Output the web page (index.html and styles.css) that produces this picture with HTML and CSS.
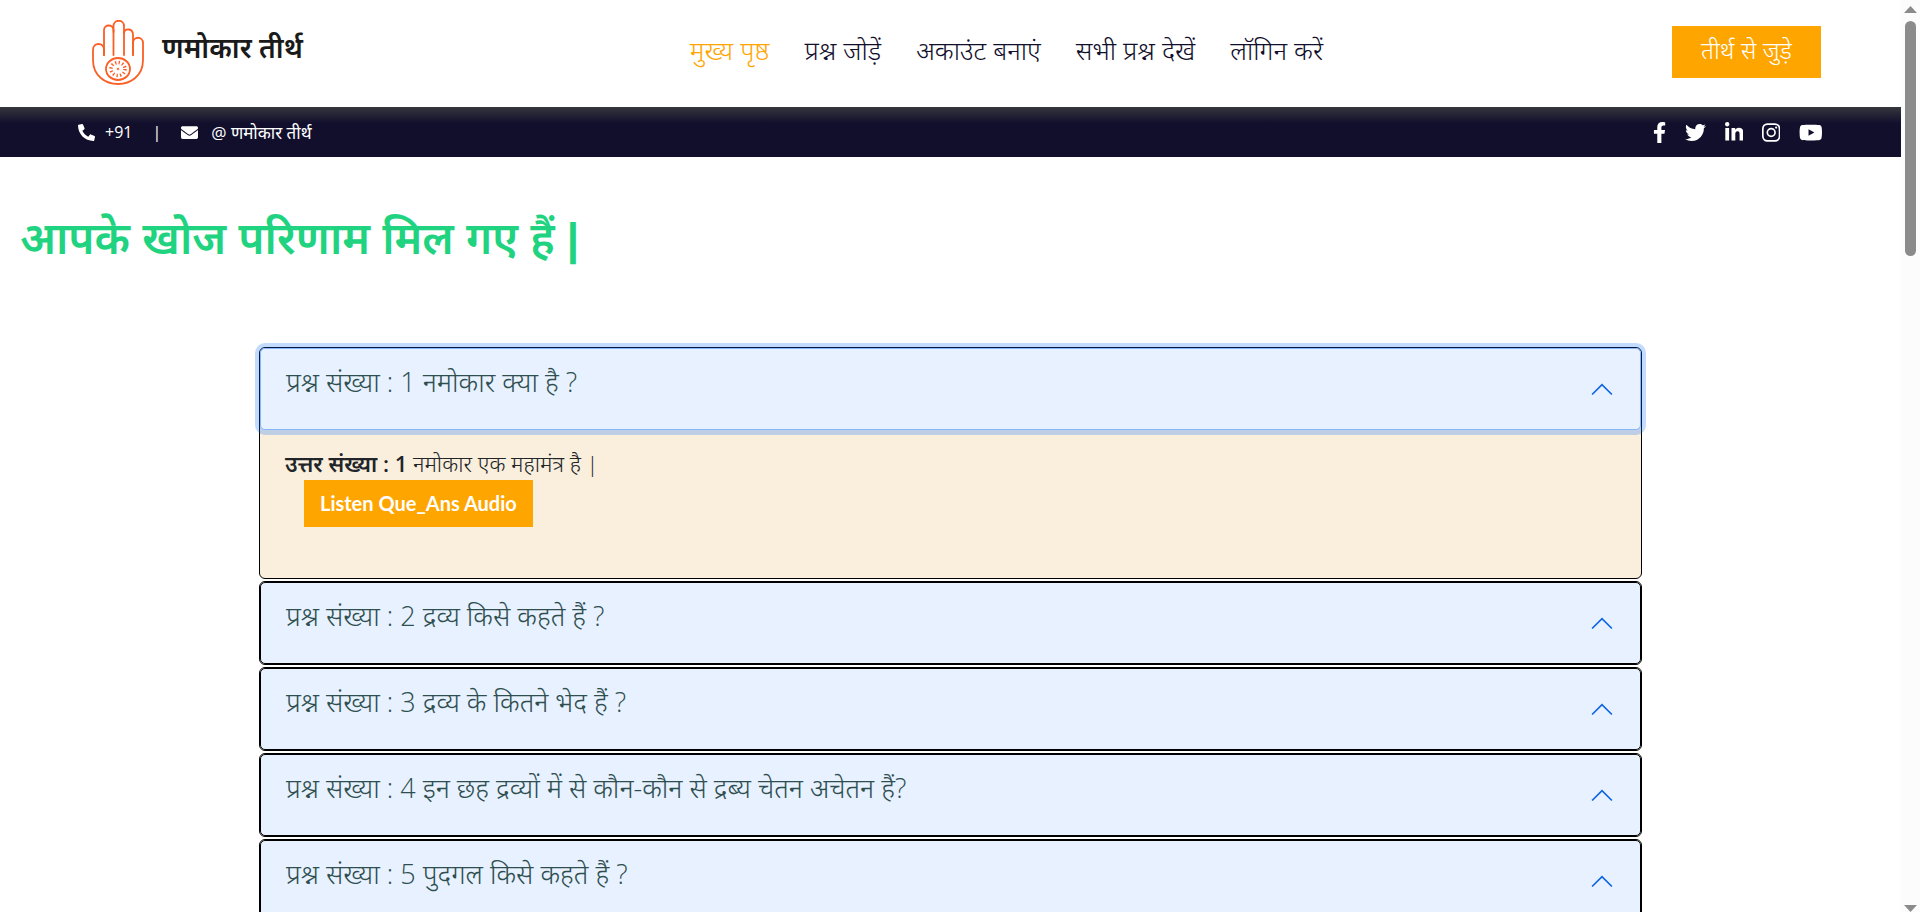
FILE: index.html
```
<!DOCTYPE html>
<html lang="hi">

<head>
  <meta charset="UTF-8">
  <meta name="viewport" content="width=device-width, initial-scale=1">
  <title>णमोकार तीर्थ</title>
  <link rel="stylesheet" href="styles.css">
</head>

<body>
  <div class="page">
    <header class="header">
      <a class="brand" href="#">
        <svg class="brand-logo" viewBox="0 0 54 68" fill="none" stroke="#fb5f26" stroke-width="1.8" stroke-linecap="round">
          <path d="M13 35V30C13 22 2 22 2 30V40C2 72 52 72 52 40V23C52 16 42 16 42 23V35" />
          <path d="M13 35V10C13 4 22.500 4 22.500 10V35" />
          <path d="M22.500 12V6C22.500 -1 33 -1 33 6V35" />
          <path d="M33 13C34 8 42 8 42 15V35" />
          <ellipse cx="27" cy="49" rx="12" ry="11" />
          <ellipse cx="27" cy="49" rx="7" ry="6.500" stroke-width="3.500" stroke-dasharray="1.300 2.250" stroke-linecap="butt" />
          <circle cx="27" cy="49" r=".4" />
        </svg>
        <span>णमोकार तीर्थ</span>
      </a>
      <nav class="nav">
        <a class="active" href="#">मुख्य पृष्ठ</a>
        <a href="#">प्रश्न जोड़ें</a>
        <a href="#">अकाउंट बनाएं</a>
        <a href="#">सभी प्रश्न देखें</a>
        <a href="#">लॉगिन करें</a>
      </nav>
      <a class="join" href="#">तीर्थ से जुड़े</a>
    </header>

    <div class="topbar">
      <div class="contact">
        <svg class="icon" viewBox="0 0 512 512"><path d="M493.400 24.600l-104-24c-11.300-2.600-22.900 3.300-27.500 13.900l-48 112c-4.200 9.800-1.400 21.300 6.900 28l60.600 49.600c-36 76.700-98.900 140.500-177.200 177.200l-49.600-60.600c-6.800-8.300-18.200-11.100-28-6.900l-112 48C3.900 366.500-2 378.100.6 389.400l24 104C27.100 504.200 36.700 512 48 512c256.100 0 464-207.500 464-464 0-11.200-7.700-20.900-18.600-23.400z" transform="matrix(-1 0 0 1 512 0)" /></svg>
        <span>+91</span>
        <span class="divider">|</span>
        <svg class="icon" viewBox="0 0 512 512"><path d="M502.300 190.800c3.900-3.100 9.700-.2 9.700 4.700V400c0 26.500-21.500 48-48 48H48c-26.500 0-48-21.500-48-48V195.600c0-5 5.700-7.800 9.700-4.700 22.400 17.400 52.100 39.500 154.100 113.600 21.100 15.400 56.700 47.800 92.200 47.600 35.700.3 72-32.800 92.300-47.600 102-74.100 131.600-96.300 154-113.700zM256 320c23.200.4 56.600-29.200 73.400-41.400 132.700-96.300 142.800-104.700 173.400-128.700 5.800-4.500 9.200-11.500 9.200-18.900v-19c0-26.500-21.500-48-48-48H48c-26.500 0-48 21.500-48 48v19c0 7.400 3.400 14.300 9.200 18.900 30.600 23.900 40.700 32.400 173.400 128.700 16.800 12.200 50.200 41.800 73.400 41.400z" /></svg>
        <a class="mail" href="#">@ णमोकार तीर्थ</a>
      </div>
      <div class="social">
        <a href="#" aria-label="Facebook"><svg viewBox="0 0 320 512"><path d="M279.140 288l14.220-92.660h-88.910v-60.130c0-25.350 12.420-50.060 52.240-50.060h40.420V6.260S260.430 0 225.360 0c-73.220 0-121.080 44.380-121.080 124.720v70.620H22.890V288h81.390v224h100.170V288z" /></svg></a>
        <a href="#" aria-label="Twitter"><svg viewBox="0 0 512 512"><path d="M459.370 151.716c.325 4.548.325 9.097.325 13.645 0 138.720-105.583 298.558-298.558 298.558-59.452 0-114.680-17.219-161.137-47.106 8.447.974 16.568 1.299 25.340 1.299 49.055 0 94.213-16.568 130.274-44.832-46.132-.975-84.792-31.188-98.112-72.772 6.498.974 12.995 1.624 19.818 1.624 9.421 0 18.843-1.300 27.614-3.573-48.081-9.747-84.143-51.980-84.143-102.985v-1.299c13.969 7.797 30.214 12.670 47.431 13.319-28.264-18.843-46.781-51.005-46.781-87.391 0-19.492 5.197-37.360 14.294-52.954 51.655 63.675 129.300 105.258 216.365 109.807-1.624-7.797-2.599-15.918-2.599-24.040 0-57.828 46.782-104.934 104.934-104.934 30.213 0 57.502 12.670 76.670 33.137 23.715-4.548 46.456-13.320 66.599-25.340-7.798 24.366-24.366 44.833-46.132 57.827 21.117-2.273 41.584-8.122 60.426-16.243-14.292 20.791-32.161 39.308-52.628 54.253z" /></svg></a>
        <a href="#" aria-label="LinkedIn"><svg viewBox="0 0 448 512"><path d="M100.280 448H7.400V148.900h92.880zM53.790 108.100C24.090 108.100 0 83.500 0 53.800a53.790 53.790 0 0 1 107.580 0c0 29.700-24.100 54.300-53.790 54.300zM447.900 448h-92.680V302.400c0-34.700-.7-79.200-48.290-79.200-48.290 0-55.690 37.700-55.690 76.700V448h-92.780V148.900h89.080v40.800h1.300c12.400-23.500 42.690-48.300 87.880-48.300 94 0 111.280 61.900 111.280 142.300V448z" /></svg></a>
        <a href="#" aria-label="Instagram"><svg viewBox="0 0 448 512"><path fill-rule="evenodd" d="M130 32H318A130 130 0 0 1 448 162V350A130 130 0 0 1 318 480H130A130 130 0 0 1 0 350V162A130 130 0 0 1 130 32zM136 73A95 95 0 0 0 41 168V344A95 95 0 0 0 136 439H312A95 95 0 0 0 407 344V168A95 95 0 0 0 312 73zM224 141a115 115 0 1 1 0 230 115 115 0 0 1 0-230zM224 182a74 74 0 1 0 0 148 74 74 0 0 0 0-148zM344 110a27 27 0 1 1 0 54 27 27 0 0 1 0-54z" /></svg></a>
        <a href="#" aria-label="YouTube"><svg viewBox="0 0 576 512"><path d="M549.655 124.083c-6.281-23.650-24.787-42.276-48.284-48.597C458.781 64 288 64 288 64S117.220 64 74.629 75.486c-23.497 6.322-42.003 24.947-48.284 48.597-11.412 42.867-11.412 132.305-11.412 132.305s0 89.438 11.412 132.305c6.281 23.650 24.787 41.500 48.284 47.821C117.220 448 288 448 288 448s170.780 0 213.371-11.486c23.497-6.321 42.003-24.171 48.284-47.821 11.412-42.867 11.412-132.305 11.412-132.305s0-89.438-11.412-132.305zm-317.510 213.508V175.185l142.739 81.205-142.739 81.201z" /></svg></a>
      </div>
    </div>

    <main>
      <h1>आपके खोज परिणाम मिल गए हैं |</h1>

      <div class="accordion">
        <div class="item">
          <button class="question focused" type="button" aria-expanded="true">
            <span>प्रश्न संख्या : 1 नमोकार क्या है ?</span>
            <svg class="chevron" viewBox="0 0 20 20"><path d="M1 15L10 6L19 15" /></svg>
          </button>
          <div class="answer">
            <p><strong>उत्तर संख्या : 1</strong> नमोकार एक महामंत्र है |</p>
            <button class="listen" type="button">Listen Que_Ans Audio</button>
          </div>
        </div>
        <div class="item">
          <button class="question" type="button">
            <span>प्रश्न संख्या : 2 द्रव्य किसे कहते हैं ?</span>
            <svg class="chevron" viewBox="0 0 20 20"><path d="M1 15L10 6L19 15" /></svg>
          </button>
        </div>
        <div class="item">
          <button class="question" type="button">
            <span>प्रश्न संख्या : 3 द्रव्य के कितने भेद हैं ?</span>
            <svg class="chevron" viewBox="0 0 20 20"><path d="M1 15L10 6L19 15" /></svg>
          </button>
        </div>
        <div class="item">
          <button class="question" type="button">
            <span>प्रश्न संख्या : 4 इन छह द्रव्यों में से कौन-कौन से द्रब्य चेतन अचेतन हैं?</span>
            <svg class="chevron" viewBox="0 0 20 20"><path d="M1 15L10 6L19 15" /></svg>
          </button>
        </div>
        <div class="item">
          <button class="question" type="button">
            <span>प्रश्न संख्या : 5 पुदगल किसे कहते हैं ?</span>
            <svg class="chevron" viewBox="0 0 20 20"><path d="M1 15L10 6L19 15" /></svg>
          </button>
        </div>
      </div>
    </main>
  </div>

  <div class="scrollbar" aria-hidden="true">
    <svg class="arrow" viewBox="0 0 13 7"><path d="M6.500 0L13 7H0z" /></svg>
    <div class="track">
      <div class="thumb"></div>
    </div>
    <svg class="arrow" viewBox="0 0 13 7"><path d="M0 0H13L6.500 7z" /></svg>
  </div>
</body>

</html>
```
FILE: styles.css
```
* {
  box-sizing: border-box;
}

body {
  display: flex;
  height: 100vh;
  margin: 0;
  overflow: hidden;
  font-family: "Open Sans", "Noto Sans", "Noto Sans Devanagari", sans-serif;
  font-size: 16px;
  color: #212529;
  background-color: #fff;
}

a {
  color: inherit;
  text-decoration: none;
}

button {
  border: none;
  font-family: inherit;
  cursor: pointer;
}

.page {
  flex: 1;
  min-width: 0;
  overflow: hidden;
}

/* header */
.header {
  display: flex;
  align-items: center;
  justify-content: space-between;
  height: 107px;
  padding: 0 80px;
}

.brand {
  display: flex;
  align-items: center;
  gap: 17px;
  padding: 0 38px 0 11px;
  font-size: 28px;
  font-weight: 600;
  line-height: 40px;
  color: #1a1a1a;
}

.brand-logo {
  width: 54px;
  height: 68px;
}

.brand span {
  padding-bottom: 14px;
}

.nav {
  display: flex;
  gap: 35px;
  padding-bottom: 8px;
  font-family: Lato, "Noto Sans Devanagari", sans-serif;
  font-size: 26px;
  font-weight: 300;
  line-height: 40px;
  white-space: nowrap;
  color: #120f2d;
}

.nav .active {
  color: #ffa500;
}

.join {
  padding: 4px 29px 8px;
  margin-bottom: 3px;
  font-family: Lato, "Noto Sans Devanagari", sans-serif;
  font-size: 24px;
  font-weight: 300;
  line-height: 40px;
  color: #fff;
  background-color: #ffa500;
}

/* contact strip */
.topbar {
  display: flex;
  align-items: center;
  justify-content: space-between;
  height: 50px;
  padding: 0 78px;
  color: #fff;
  background: linear-gradient(#36363c, #120f2d 16px);
}

.contact {
  display: flex;
  align-items: center;
  font-size: 16px;
}

.icon {
  width: 17px;
  height: 17px;
  margin-right: 10px;
  fill: #fff;
}

.divider {
  margin: 0 20px;
}

.mail {
  margin-left: 3px;
  font-size: 17px;
}

.social {
  display: flex;
  align-items: center;
  gap: 19px;
}

.social svg {
  display: block;
  height: 21px;
  fill: #fff;
}

/* results */
h1 {
  margin: 52px 20px 78px;
  font-family: "Liberation Sans", "Noto Sans Devanagari", sans-serif;
  font-size: 44px;
  font-weight: 600;
  line-height: 60px;
  color: #1fd380;
}

.accordion {
  display: flex;
  flex-direction: column;
  gap: 2px;
  margin: 0 259px;
}

.item {
  border: 1px solid #000;
  border-radius: 6px;
  background-color: #faeedd;
}

.question {
  display: flex;
  align-items: center;
  justify-content: space-between;
  width: 100%;
  height: 82px;
  padding: 0 27px 0 25px;
  border: 1px solid #000;
  border-radius: 5px;
  font-size: 27px;
  font-weight: 300;
  text-align: left;
  color: #2f4f4f;
  background-color: #e7f1ff;
}

.question span {
  padding-bottom: 16px;
}

.question.focused {
  border-color: #86b7fe;
  box-shadow: 0 0 0 5px rgba(13, 110, 253, .25);
}

.chevron {
  width: 22px;
  height: 22px;
  fill: none;
  stroke: #0c63e4;
  stroke-width: 1.5;
}

.answer {
  height: 148px;
  padding: 16px 25px;
}

.answer p {
  margin: 0;
  font-size: 22px;
  font-weight: 300;
  line-height: 34px;
}

.answer strong {
  font-weight: 600;
}

.listen {
  height: 47px;
  padding: 0 16px 2px;
  margin-left: 19px;
  font-family: Lato, sans-serif;
  font-size: 20px;
  font-weight: 700;
  color: #fff;
  background-color: #ffa500;
}

/* scroll rail */
.scrollbar {
  display: flex;
  flex-direction: column;
  align-items: center;
  width: 19px;
  padding: 6px 0 0;
  background-color: #fcfcfc;
}

.arrow {
  width: 13px;
  height: 7px;
  fill: #8b8b8b;
}

.track {
  flex: 1;
  width: 11px;
  padding-top: 8px;
}

.thumb {
  height: 235px;
  border-radius: 6px;
  background-color: #8b8b8b;
}
```
